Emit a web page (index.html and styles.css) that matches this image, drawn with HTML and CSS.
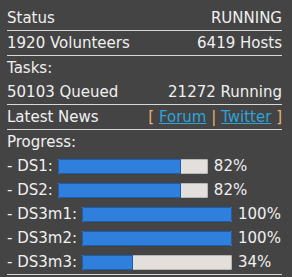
FILE: index.html
```html
<!DOCTYPE html>
<html lang="en">
<head>
    <meta charset="UTF-8">
    <meta name="viewport" content="width=device-width, initial-scale=1.0">
    <title>Project Status</title>
    <link rel="stylesheet" href="styles.css">
</head>
<body>

<div class="panel">
    <div class="row line"><span>Status</span><span>RUNNING</span></div>
    <div class="row line"><span>1920 Volunteers</span><span>6419 Hosts</span></div>
    <div class="row"><span>Tasks:</span></div>
    <div class="row line"><span>50103 Queued</span><span>21272 Running</span></div>
    <div class="row line">
        <span>Latest News</span>
        <span class="news"><span class="sep">[</span> <a href="#">Forum</a> <span class="sep">|</span> <a href="#">Twitter</a> <span class="sep">]</span></span>
    </div>
    <div class="row"><span>Progress:</span></div>

    <!-- progress bars -->
    <div class="row prog"><span>- DS1:</span><div class="bar"><div class="fill" style="width: 82%"></div></div><span class="pct">82%</span></div>
    <div class="row prog"><span>- DS2:</span><div class="bar"><div class="fill" style="width: 82%"></div></div><span class="pct">82%</span></div>
    <div class="row prog"><span>- DS3m1:</span><div class="bar"><div class="fill" style="width: 100%"></div></div><span class="pct">100%</span></div>
    <div class="row prog"><span>- DS3m2:</span><div class="bar"><div class="fill" style="width: 100%"></div></div><span class="pct">100%</span></div>
    <div class="row prog line"><span>- DS3m3:</span><div class="bar"><div class="fill" style="width: 34%"></div></div><span class="pct">34%</span></div>
</div>

</body>
</html>
```

FILE: styles.css
```css
/* Dark status panel */
body {
    margin: 0;
    background-color: #444444;
    font-family: "DejaVu Sans", Verdana, sans-serif;
    font-size: 15px;
    color: #f0f0f0;
}

.panel {
    width: 275px;
    padding: 6px 10px 0 7px;
}

/* Each line of the panel */
.row {
    display: flex;
    justify-content: space-between;
    align-items: center;
    height: 24px;
    line-height: 24px;
    white-space: nowrap;
}

.line {
    border-bottom: 1px solid #d8d8d8;
}

/* News links */
.sep {
    color: #eeb070;
}

.news a {
    color: #2ea3d8;
    text-decoration: underline;
}

/* Progress rows */
.prog {
    justify-content: flex-start;
}

.bar {
    width: 150px;
    height: 15px;
    margin-left: 5px;
    background-color: #e2dfdc;
    box-shadow: inset 0 0 0 1px #b9b6b3;
    border-radius: 2px;
    overflow: hidden;
}

.fill {
    box-sizing: border-box;
    height: 15px;
    background-color: #2f7fdc;
    border: 1px solid #1c5cae;
}

.pct {
    margin-left: 6px;
}
```
